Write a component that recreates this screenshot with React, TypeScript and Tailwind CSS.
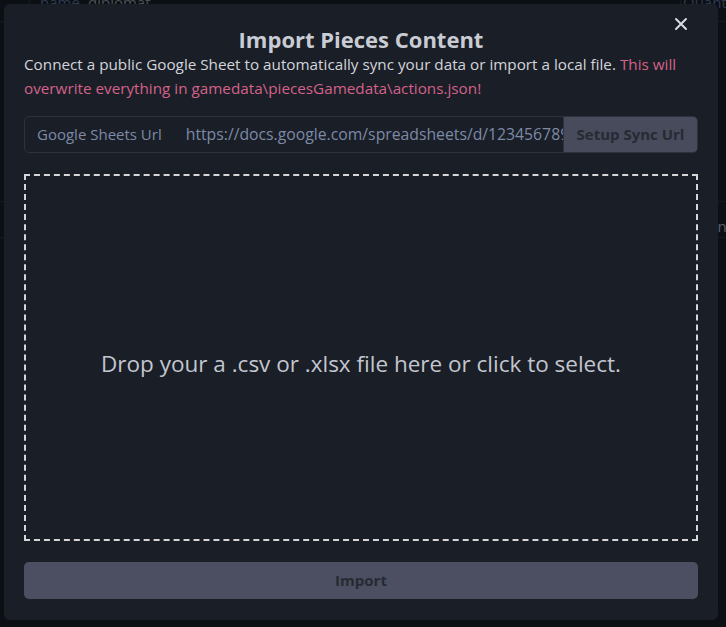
import React from "react";

function BgTable() {
  return (
    <div className="absolute inset-0 flex flex-col">
      <div className="flex h-[22px] border-b border-[#161a20] text-[15px] leading-[16px] items-start overflow-hidden">
        <div className="w-[30px] h-full border-r border-[#161a20]" />
        <div className="pl-[10px] w-[58px] text-[#2e3a52] -mt-[6px]">name</div>
        <div className="flex-1 text-[#4a4f58] -mt-[6px]">diplomat</div>
        <div className="w-[46px] text-[#2e3a52] -mt-[6px] border-l border-[#161a20] pl-[2px]">Quant</div>
      </div>
      <div className="h-[180px] border-b border-[#161a20] flex">
        <div className="w-[30px] h-full border-r border-[#161a20]" />
      </div>
      <div className="h-[36px] border-b border-[#161a20] flex">
        <div className="w-[30px] h-full border-r border-[#161a20]" />
        <div className="flex-1" />
        <div className="self-end text-[15px] text-[#5a6070] translate-x-[6px]">nt</div>
      </div>
    </div>
  );
}

export default function App() {
  return (
    <div
      className="relative w-[726px] h-[627px] overflow-hidden bg-[#0c0f13] p-[4px] pb-[7px] flex"
      style={{ fontFamily: '"Open Sans", "Noto Sans", sans-serif' }}
    >
      <BgTable />

      {/* modal */}
      <div className="relative w-[714px] min-w-0 shrink-0 rounded-[6px] bg-[#1a1e26] px-[20px] pt-[20px] pb-[20px] flex flex-col">
        <button className="absolute right-[30px] top-[13px]">
          <svg width="14" height="14" viewBox="0 0 14 14">
            <path d="M2 2 L12 12 M12 2 L2 12" stroke="#d8dbe2" strokeWidth="2" strokeLinecap="round" />
          </svg>
        </button>
        <h1 className="text-center text-[22px] font-bold leading-[30px] text-[#c9ccd4]">
          Import Pieces Content
        </h1>
        <p className="text-[15.25px] leading-[24px] text-[#d2d5dc] -mt-[2px]">
          Connect a public Google Sheet to automatically sync your data or import a local file.{" "}
          <span className="text-[#d4628a]">
            This will overwrite everything in gamedata\piecesGamedata\actions.json!
          </span>
        </p>

        <div className="mt-[16px] flex h-[37px] rounded-[5px] border border-[#2c323e] overflow-hidden">
          <div className="flex items-center pl-[12px] pr-[24px] text-[15px] text-[#7d8aa6] whitespace-nowrap">
            Google Sheets Url
          </div>
          <div className="flex-1 min-w-0 flex items-center overflow-hidden text-[15.75px] text-[#7d8aa6] whitespace-nowrap">
            https://docs.google.com/spreadsheets/d/123456789abcdef
          </div>
          <button className="w-[134px] shrink-0 bg-[#474b5c] border-l border-[#2c323e] text-[15px] font-bold text-[#262a33]">
            Setup Sync Url
          </button>
        </div>

        <div className="mt-[21px] h-[367px] border-2 border-dashed border-[#d6d6d8] flex items-center justify-center pt-[12px]">
          <span className="text-[22.5px] text-[#c3c6d0]">
            Drop your a .csv or .xlsx file here or click to select.
          </span>
        </div>

        <button className="mt-[21px] h-[37px] rounded-[5px] bg-[#4b4f61] text-[15px] font-bold text-[#262a33]">
          Import
        </button>
      </div>
    </div>
  );
}
